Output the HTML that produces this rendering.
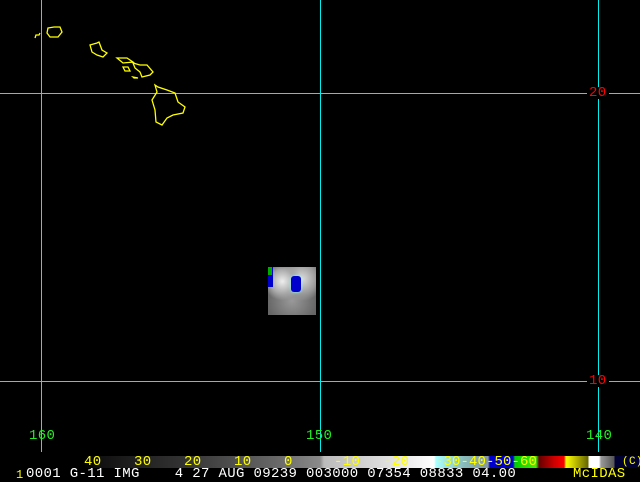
<!DOCTYPE html><html><head><style>
body{margin:0;background:#000;width:640px;height:480px;overflow:hidden;position:relative;font-family:"Liberation Mono",monospace}
.a{position:absolute}
.t{position:absolute;font-size:14px;line-height:12px;white-space:pre;letter-spacing:0.35px}
</style></head><body>
<div class="a" style="left:41px;top:0;width:1px;height:452px;background:#0ee"></div>
<div class="a" style="left:320px;top:0;width:1px;height:452px;background:#0ee"></div>
<div class="a" style="left:598px;top:0;width:1px;height:452px;background:#0ee"></div>
<div class="a" style="left:0;top:93px;width:640px;height:1px;background:#0ee"></div>
<div class="a" style="left:0;top:381px;width:640px;height:1px;background:#0ee"></div>
<div class="t" style="left:587px;top:87px;color:#f00;background:#000;padding:0 2px">20</div>
<div class="t" style="left:587px;top:375px;color:#f00;background:#000;padding:0 2px">10</div>
<div class="t" style="left:29px;top:430px;color:#2e2">160</div>
<div class="t" style="left:306px;top:430px;color:#2e2">150</div>
<div class="t" style="left:586px;top:430px;color:#2e2">140</div>
<svg class="a" style="left:0;top:0" width="640" height="480" fill="none" stroke="#ff0" stroke-width="1.3">
<path d="M35 38l1-3 3 0 1-2M48 28l6-1 6 0 2 5-4 5-8 0-3-4z"/>
<path d="M90 45l7-2 2-1 3 8 5 3-4 4-6-2-5-3z"/>
<path d="M117 58l10 0 6 4-10 1zM123 67l5 0 2 4-5 0zM133 63l7 2 7 0 6 7-3 3-8 2-2-5-5-4zM133 77l5 1-4 0z"/>
<path d="M155 85l3 2 9 3 8 3 3 9 7 5-2 6-10 2-6 3-5 7-6-3-1-12-3-10 5-8z"/>
</svg>
<div class="a" style="left:268px;top:267px;width:48px;height:48px;background:radial-gradient(circle at 30% 30%,#eee,#aaa 25%,transparent 40%),radial-gradient(circle at 70% 25%,#ddd,#999 30%,transparent 45%),radial-gradient(circle at 50% 70%,#999,#666 60%),#777"></div>
<div class="a" style="left:268px;top:267px;width:5px;height:20px;background:#00c"></div>
<div class="a" style="left:268px;top:267px;width:4px;height:8px;background:#0a0"></div>
<div class="a" style="left:291px;top:276px;width:10px;height:16px;background:#00c;border-radius:3px;box-shadow:0 0 3px #8ff"></div>
<div class="a" style="left:84px;top:456px;width:556px;height:12px;background:linear-gradient(to right,#000 0px,#111 16px,#333 100px,#666 190px,#8a8a8a 236px,#bbb 240px,#ddd 300px,#fff 350px,#aff 352px,#8bb 380px,#899 404px,#00c 406px,#00c 429px,#0c0 431px,#4e0 452px,#600 455px,#c00 470px,#f00 480px,#ff0 482px,#660 504px,#fff 505px,#fff 515px,#999 517px,#555 530px,#003 531px,#003 556px)"></div>
<div class="t" style="left:84px;top:456px;color:#ff0">40</div>
<div class="t" style="left:134px;top:456px;color:#ff0">30</div>
<div class="t" style="left:184px;top:456px;color:#ff0">20</div>
<div class="t" style="left:234px;top:456px;color:#ff0">10</div>
<div class="t" style="left:284px;top:456px;color:#ff0">0</div>
<div class="t" style="left:334px;top:456px;color:#ff0">-10</div>
<div class="t" style="left:383px;top:456px;color:#ff0">-20</div>
<div class="t" style="left:435px;top:456px;color:#ff0;letter-spacing:0.1px">-30-40-50-60</div>
<div class="t" style="left:622px;top:456px;color:#ff0;font-size:11px">(C)</div>
<div class="t" style="left:16px;top:469px;color:#ff0;font-size:12px">1</div>
<div class="t" style="left:26px;top:468px;color:#fff">0001 G-11 IMG    4 27 AUG 09239 003000 07354 08833 04.00</div>
<div class="t" style="left:573px;top:468px;color:#ff0">McIDAS</div>
</body></html>
